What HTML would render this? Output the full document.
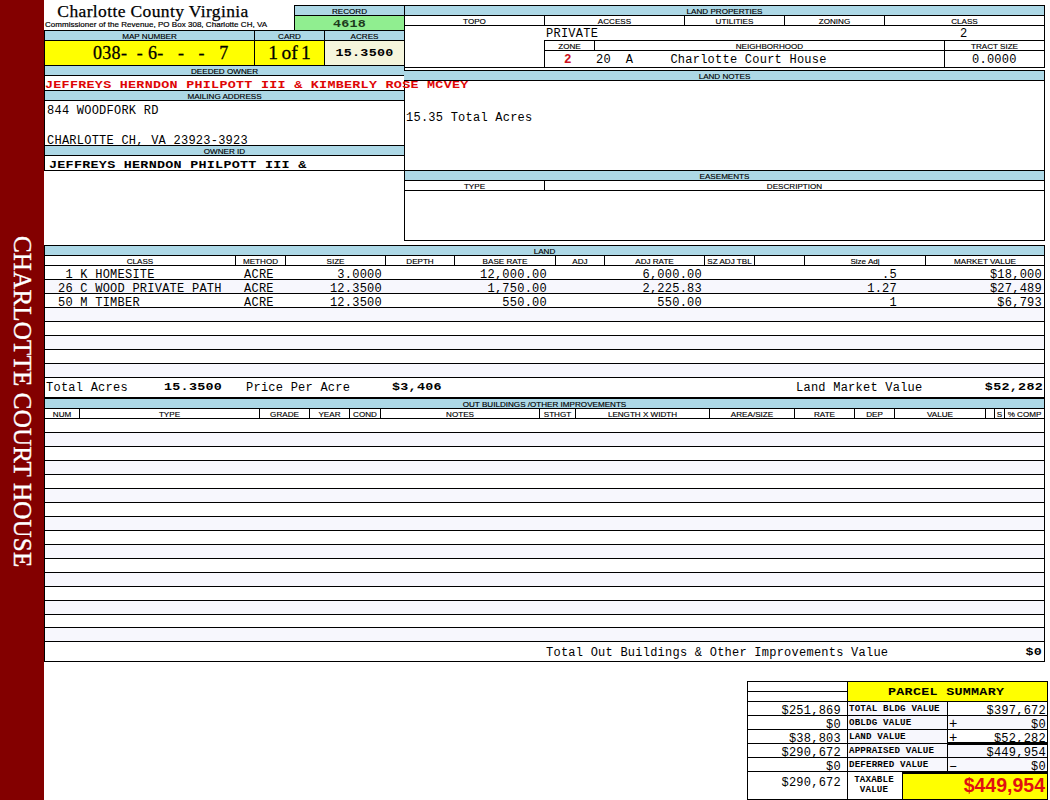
<!DOCTYPE html>
<html><head><meta charset="utf-8"><title>Charlotte County Virginia</title>
<style>
html,body{margin:0;padding:0;}
body{width:1050px;height:800px;position:relative;overflow:hidden;background:#fff;}
div{position:absolute;white-space:pre;box-sizing:border-box;}
.side{left:44px;top:236px;transform-origin:0 0;transform:rotate(90deg);color:#fff;
 font-family:"Liberation Serif",serif;font-size:25px;line-height:43px;height:44px;letter-spacing:0.2px;-webkit-text-stroke:0.35px #fff;}
.title{font-family:"Liberation Serif",serif;font-size:17.5px;line-height:20px;letter-spacing:0.37px;color:#000;-webkit-text-stroke:0.25px #000;}
.sub{font-family:"Liberation Sans",sans-serif;font-size:8px;line-height:10px;color:#000;letter-spacing:0.03px;-webkit-text-stroke:0.2px #000;}
.h{font-family:"Liberation Sans",sans-serif;font-size:8.1px;line-height:9px;height:9px;margin-top:1px;color:#000;-webkit-text-stroke:0.15px #000;}
.m{font-family:"Liberation Mono",monospace;font-size:12px;line-height:14px;letter-spacing:0.24px;color:#000;}
.mb{font-family:"Liberation Mono",monospace;font-size:13.4px;line-height:14px;font-weight:bold;letter-spacing:0.27px;color:#000;transform:scaleY(0.82);transform-origin:0 0;margin-top:1.6px;}
.mapno{font-family:"Liberation Serif",serif;font-size:18px;line-height:24px;letter-spacing:0.3px;color:#000;-webkit-text-stroke:0.3px #000;}
.card{font-family:"Liberation Serif",serif;font-size:19.5px;line-height:25px;color:#000;word-spacing:-1.5px;-webkit-text-stroke:0.3px #000;}
.ps{font-family:"Liberation Mono",monospace;font-size:13px;line-height:15px;font-weight:bold;color:#000;letter-spacing:0.6px;}
.lb{font-family:"Liberation Mono",monospace;font-size:9.2px;line-height:11px;font-weight:bold;letter-spacing:0.16px;color:#000;}
.big{font-family:"Liberation Sans",sans-serif;font-size:19.5px;line-height:28px;font-weight:bold;color:#e01010;padding-right:2px;}
</style></head>
<body>
<div style="left:0px;top:0px;width:44px;height:800px;background:#830000;"></div>
<div class="side">CHARLOTTE COURT HOUSE</div>
<div class="title" style="left:45px;top:1px;width:216px;text-align:center;">Charlotte County Virginia</div>
<div class="sub" style="left:45px;top:20px;">Commissioner of the Revenue, PO Box 308, Charlotte CH, VA</div>
<div style="left:294px;top:5px;width:111px;height:26px;background:#add8e6;"></div>
<div style="left:295px;top:16px;width:109px;height:14px;background:#90ee90;"></div>
<div style="left:294px;top:5px;width:111px;height:1px;background:#000"></div>
<div style="left:294px;top:15px;width:111px;height:1px;background:#000"></div>
<div style="left:294px;top:5px;width:1px;height:26px;background:#000"></div>
<div class="h" style="left:294px;top:6px;width:111px;text-align:center;">RECORD</div>
<div class="mb" style="left:294px;top:17px;width:111px;text-align:center;color:#1c3a1c;">4618</div>
<div style="left:44px;top:30px;width:361px;height:141px;background:#fff;"></div>
<div style="left:44px;top:31px;width:361px;height:9px;background:#add8e6;"></div>
<div style="left:44px;top:66px;width:361px;height:9px;background:#add8e6;"></div>
<div style="left:44px;top:91px;width:361px;height:9px;background:#add8e6;"></div>
<div style="left:44px;top:146px;width:361px;height:9px;background:#add8e6;"></div>
<div style="left:45px;top:41px;width:279px;height:24px;background:#ffff00;"></div>
<div style="left:325px;top:41px;width:79px;height:24px;background:#f5f5dc;"></div>
<div style="left:44px;top:30px;width:361px;height:1px;background:#000"></div>
<div style="left:44px;top:40px;width:361px;height:1px;background:#000"></div>
<div style="left:44px;top:65px;width:361px;height:1px;background:#000"></div>
<div style="left:44px;top:75px;width:361px;height:1px;background:#000"></div>
<div style="left:44px;top:90px;width:361px;height:1px;background:#000"></div>
<div style="left:44px;top:100px;width:361px;height:1px;background:#000"></div>
<div style="left:44px;top:145px;width:361px;height:1px;background:#000"></div>
<div style="left:44px;top:155px;width:361px;height:1px;background:#000"></div>
<div style="left:44px;top:30px;width:1px;height:141px;background:#000"></div>
<div style="left:254px;top:30px;width:1px;height:36px;background:#000"></div>
<div style="left:324px;top:30px;width:1px;height:36px;background:#000"></div>
<div class="h" style="left:44px;top:31px;width:211px;text-align:center;">MAP NUMBER</div>
<div class="h" style="left:254px;top:31px;width:71px;text-align:center;">CARD</div>
<div class="h" style="left:324px;top:31px;width:81px;text-align:center;">ACRES</div>
<div class="h" style="left:44px;top:66px;width:361px;text-align:center;">DEEDED OWNER</div>
<div class="h" style="left:44px;top:91px;width:361px;text-align:center;">MAILING ADDRESS</div>
<div class="h" style="left:44px;top:146px;width:361px;text-align:center;">OWNER ID</div>
<div class="mapno" style="left:93px;top:41px;">038-  - 6-   -   -   7</div>
<div class="card" style="left:254px;top:40px;width:71px;text-align:center;">1 of 1</div>
<div class="mb" style="left:324px;top:46px;width:81px;text-align:center;">15.3500</div>
<div class="m" style="left:47px;top:104px;">844 WOODFORK RD</div>
<div class="m" style="left:47px;top:134px;">CHARLOTTE CH, VA 23923-3923</div>
<div class="mb" style="left:49px;top:158px;">JEFFREYS HERNDON PHILPOTT III &amp;</div>
<div style="left:404px;top:5px;width:641px;height:10px;background:#add8e6;"></div>
<div style="left:404px;top:5px;width:641px;height:1px;background:#000"></div>
<div style="left:404px;top:15px;width:641px;height:1px;background:#000"></div>
<div style="left:404px;top:25px;width:641px;height:1px;background:#000"></div>
<div style="left:404px;top:67px;width:641px;height:1px;background:#000"></div>
<div style="left:404px;top:5px;width:1px;height:236px;background:#000"></div>
<div style="left:1044px;top:5px;width:1px;height:63px;background:#000"></div>
<div style="left:544px;top:15px;width:1px;height:11px;background:#000"></div>
<div style="left:684px;top:15px;width:1px;height:11px;background:#000"></div>
<div style="left:784px;top:15px;width:1px;height:11px;background:#000"></div>
<div style="left:884px;top:15px;width:1px;height:11px;background:#000"></div>
<div class="h" style="left:404px;top:6px;width:641px;text-align:center;">LAND PROPERTIES</div>
<div class="h" style="left:404px;top:16px;width:141px;text-align:center;">TOPO</div>
<div class="h" style="left:544px;top:16px;width:141px;text-align:center;">ACCESS</div>
<div class="h" style="left:684px;top:16px;width:101px;text-align:center;">UTILITIES</div>
<div class="h" style="left:784px;top:16px;width:101px;text-align:center;">ZONING</div>
<div class="h" style="left:884px;top:16px;width:161px;text-align:center;">CLASS</div>
<div class="m" style="left:546px;top:27px;">PRIVATE</div>
<div class="m" style="left:960px;top:27px;">2</div>
<div style="left:544px;top:40px;width:501px;height:1px;background:#000"></div>
<div style="left:544px;top:50px;width:501px;height:1px;background:#000"></div>
<div style="left:544px;top:40px;width:1px;height:28px;background:#000"></div>
<div style="left:594px;top:40px;width:1px;height:11px;background:#000"></div>
<div style="left:944px;top:40px;width:1px;height:28px;background:#000"></div>
<div class="h" style="left:544px;top:41px;width:51px;text-align:center;">ZONE</div>
<div class="h" style="left:594px;top:41px;width:351px;text-align:center;">NEIGHBORHOOD</div>
<div class="h" style="left:944px;top:41px;width:101px;text-align:center;">TRACT SIZE</div>
<div class="m" style="left:564px;top:53px;color:#cc1020;font-weight:bold;font-size:12.5px;">2</div>
<div class="m" style="left:596px;top:53px;">20  A     Charlotte Court House</div>
<div class="m" style="left:972px;top:53px;">0.0000</div>
<div style="left:404px;top:70px;width:641px;height:10px;background:#add8e6;"></div>
<div style="left:404px;top:70px;width:641px;height:1px;background:#000"></div>
<div style="left:404px;top:80px;width:641px;height:1px;background:#000"></div>
<div style="left:1044px;top:70px;width:1px;height:171px;background:#000"></div>
<div style="left:44px;top:170px;width:1001px;height:1px;background:#000"></div>
<div class="h" style="left:404px;top:71px;width:641px;text-align:center;">LAND NOTES</div>
<div class="m" style="left:406px;top:111px;">15.35 Total Acres</div>
<div style="left:405px;top:171px;width:639px;height:9px;background:#add8e6;"></div>
<div style="left:404px;top:180px;width:641px;height:1px;background:#000"></div>
<div style="left:404px;top:190px;width:641px;height:1px;background:#000"></div>
<div style="left:404px;top:240px;width:641px;height:1px;background:#000"></div>
<div style="left:544px;top:180px;width:1px;height:11px;background:#000"></div>
<div class="h" style="left:404px;top:171px;width:641px;text-align:center;">EASEMENTS</div>
<div class="h" style="left:404px;top:181px;width:141px;text-align:center;">TYPE</div>
<div class="h" style="left:544px;top:181px;width:501px;text-align:center;">DESCRIPTION</div>
<div class="mb" style="left:45px;top:78px;color:#de0505;">JEFFREYS HERNDON PHILPOTT III &amp; KIMBERLY ROSE MCVEY</div>
<div style="left:44px;top:245px;width:1001px;height:10px;background:#add8e6;"></div>
<div style="left:45px;top:280px;width:999px;height:13px;background:#f7f7fd;"></div>
<div style="left:45px;top:308px;width:999px;height:13px;background:#f7f7fd;"></div>
<div style="left:45px;top:336px;width:999px;height:13px;background:#f7f7fd;"></div>
<div style="left:45px;top:364px;width:999px;height:13px;background:#f7f7fd;"></div>
<div style="left:44px;top:245px;width:1001px;height:1px;background:#000"></div>
<div style="left:44px;top:255px;width:1001px;height:1px;background:#000"></div>
<div style="left:44px;top:265px;width:1001px;height:1px;background:#000"></div>
<div style="left:44px;top:279px;width:1001px;height:1px;background:#000"></div>
<div style="left:44px;top:293px;width:1001px;height:1px;background:#000"></div>
<div style="left:44px;top:307px;width:1001px;height:1px;background:#000"></div>
<div style="left:44px;top:321px;width:1001px;height:1px;background:#000"></div>
<div style="left:44px;top:335px;width:1001px;height:1px;background:#000"></div>
<div style="left:44px;top:349px;width:1001px;height:1px;background:#000"></div>
<div style="left:44px;top:363px;width:1001px;height:1px;background:#000"></div>
<div style="left:44px;top:377px;width:1001px;height:1px;background:#000"></div>
<div style="left:44px;top:397px;width:1001px;height:2px;background:#000"></div>
<div style="left:44px;top:245px;width:1px;height:417px;background:#000"></div>
<div style="left:1044px;top:245px;width:1px;height:417px;background:#000"></div>
<div class="h" style="left:44px;top:256px;width:192px;text-align:center;">CLASS</div>
<div style="left:235px;top:255px;width:1px;height:11px;background:#000"></div>
<div class="h" style="left:235px;top:256px;width:51px;text-align:center;">METHOD</div>
<div style="left:285px;top:255px;width:1px;height:11px;background:#000"></div>
<div class="h" style="left:285px;top:256px;width:101px;text-align:center;">SIZE</div>
<div style="left:385px;top:255px;width:1px;height:11px;background:#000"></div>
<div class="h" style="left:385px;top:256px;width:70px;text-align:center;">DEPTH</div>
<div style="left:454px;top:255px;width:1px;height:11px;background:#000"></div>
<div class="h" style="left:454px;top:256px;width:102px;text-align:center;">BASE RATE</div>
<div style="left:555px;top:255px;width:1px;height:11px;background:#000"></div>
<div class="h" style="left:555px;top:256px;width:50px;text-align:center;">ADJ</div>
<div style="left:604px;top:255px;width:1px;height:11px;background:#000"></div>
<div class="h" style="left:604px;top:256px;width:101px;text-align:center;">ADJ RATE</div>
<div style="left:704px;top:255px;width:1px;height:11px;background:#000"></div>
<div class="h" style="left:704px;top:256px;width:51px;text-align:center;">SZ ADJ TBL</div>
<div style="left:754px;top:255px;width:1px;height:11px;background:#000"></div>
<div style="left:804px;top:255px;width:1px;height:11px;background:#000"></div>
<div class="h" style="left:804px;top:256px;width:122px;text-align:center;">Size Adj</div>
<div style="left:925px;top:255px;width:1px;height:11px;background:#000"></div>
<div class="h" style="left:925px;top:256px;width:120px;text-align:center;">MARKET VALUE</div>
<div class="h" style="left:44px;top:246px;width:1001px;text-align:center;">LAND</div>
<div class="m" style="left:58px;top:268px;"> 1 K HOMESITE</div>
<div class="m" style="left:244px;top:268px;">ACRE</div>
<div class="m" style="left:282px;top:268px;width:100px;text-align:right;">3.0000</div>
<div class="m" style="left:447px;top:268px;width:100px;text-align:right;">12,000.00</div>
<div class="m" style="left:602px;top:268px;width:100px;text-align:right;">6,000.00</div>
<div class="m" style="left:797px;top:268px;width:100px;text-align:right;">.5</div>
<div class="m" style="left:942px;top:268px;width:100px;text-align:right;">$18,000</div>
<div class="m" style="left:58px;top:282px;">26 C WOOD PRIVATE PATH</div>
<div class="m" style="left:244px;top:282px;">ACRE</div>
<div class="m" style="left:282px;top:282px;width:100px;text-align:right;">12.3500</div>
<div class="m" style="left:447px;top:282px;width:100px;text-align:right;">1,750.00</div>
<div class="m" style="left:602px;top:282px;width:100px;text-align:right;">2,225.83</div>
<div class="m" style="left:797px;top:282px;width:100px;text-align:right;">1.27</div>
<div class="m" style="left:942px;top:282px;width:100px;text-align:right;">$27,489</div>
<div class="m" style="left:58px;top:296px;">50 M TIMBER</div>
<div class="m" style="left:244px;top:296px;">ACRE</div>
<div class="m" style="left:282px;top:296px;width:100px;text-align:right;">12.3500</div>
<div class="m" style="left:447px;top:296px;width:100px;text-align:right;">550.00</div>
<div class="m" style="left:602px;top:296px;width:100px;text-align:right;">550.00</div>
<div class="m" style="left:797px;top:296px;width:100px;text-align:right;">1</div>
<div class="m" style="left:942px;top:296px;width:100px;text-align:right;">$6,793</div>
<div class="m" style="left:46px;top:381px;">Total Acres</div>
<div class="mb" style="left:164px;top:380px;">15.3500</div>
<div class="m" style="left:246px;top:381px;">Price Per Acre</div>
<div class="mb" style="left:392px;top:380px;">$3,406</div>
<div class="m" style="left:796px;top:381px;">Land Market Value</div>
<div class="mb" style="left:943px;top:380px;width:100px;text-align:right;">$52,282</div>
<div style="left:45px;top:399px;width:999px;height:9px;background:#add8e6;"></div>
<div style="left:45px;top:433px;width:999px;height:13px;background:#f7f7fd;"></div>
<div style="left:45px;top:461px;width:999px;height:13px;background:#f7f7fd;"></div>
<div style="left:45px;top:489px;width:999px;height:13px;background:#f7f7fd;"></div>
<div style="left:45px;top:517px;width:999px;height:13px;background:#f7f7fd;"></div>
<div style="left:45px;top:545px;width:999px;height:13px;background:#f7f7fd;"></div>
<div style="left:45px;top:573px;width:999px;height:13px;background:#f7f7fd;"></div>
<div style="left:45px;top:601px;width:999px;height:13px;background:#f7f7fd;"></div>
<div style="left:45px;top:628px;width:999px;height:13px;background:#f7f7fd;"></div>
<div style="left:44px;top:408px;width:1001px;height:1px;background:#000"></div>
<div style="left:44px;top:418px;width:1001px;height:1px;background:#000"></div>
<div style="left:44px;top:432px;width:1001px;height:1px;background:#000"></div>
<div style="left:44px;top:446px;width:1001px;height:1px;background:#000"></div>
<div style="left:44px;top:460px;width:1001px;height:1px;background:#000"></div>
<div style="left:44px;top:474px;width:1001px;height:1px;background:#000"></div>
<div style="left:44px;top:488px;width:1001px;height:1px;background:#000"></div>
<div style="left:44px;top:502px;width:1001px;height:1px;background:#000"></div>
<div style="left:44px;top:516px;width:1001px;height:1px;background:#000"></div>
<div style="left:44px;top:530px;width:1001px;height:1px;background:#000"></div>
<div style="left:44px;top:544px;width:1001px;height:1px;background:#000"></div>
<div style="left:44px;top:558px;width:1001px;height:1px;background:#000"></div>
<div style="left:44px;top:572px;width:1001px;height:1px;background:#000"></div>
<div style="left:44px;top:586px;width:1001px;height:1px;background:#000"></div>
<div style="left:44px;top:600px;width:1001px;height:1px;background:#000"></div>
<div style="left:44px;top:614px;width:1001px;height:1px;background:#000"></div>
<div style="left:44px;top:627px;width:1001px;height:1px;background:#000"></div>
<div style="left:44px;top:641px;width:1001px;height:1px;background:#000"></div>
<div style="left:44px;top:661px;width:1001px;height:1px;background:#000"></div>
<div class="h" style="left:44px;top:409px;width:36px;text-align:center;">NUM</div>
<div style="left:79px;top:408px;width:1px;height:11px;background:#000"></div>
<div class="h" style="left:79px;top:409px;width:181px;text-align:center;">TYPE</div>
<div style="left:259px;top:408px;width:1px;height:11px;background:#000"></div>
<div class="h" style="left:259px;top:409px;width:51px;text-align:center;">GRADE</div>
<div style="left:309px;top:408px;width:1px;height:11px;background:#000"></div>
<div class="h" style="left:309px;top:409px;width:41px;text-align:center;">YEAR</div>
<div style="left:349px;top:408px;width:1px;height:11px;background:#000"></div>
<div class="h" style="left:349px;top:409px;width:32px;text-align:center;">COND</div>
<div style="left:380px;top:408px;width:1px;height:11px;background:#000"></div>
<div class="h" style="left:380px;top:409px;width:160px;text-align:center;">NOTES</div>
<div style="left:539px;top:408px;width:1px;height:11px;background:#000"></div>
<div class="h" style="left:539px;top:409px;width:37px;text-align:center;">STHGT</div>
<div style="left:575px;top:408px;width:1px;height:11px;background:#000"></div>
<div class="h" style="left:575px;top:409px;width:135px;text-align:center;">LENGTH X WIDTH</div>
<div style="left:709px;top:408px;width:1px;height:11px;background:#000"></div>
<div class="h" style="left:709px;top:409px;width:86px;text-align:center;">AREA/SIZE</div>
<div style="left:794px;top:408px;width:1px;height:11px;background:#000"></div>
<div class="h" style="left:794px;top:409px;width:61px;text-align:center;">RATE</div>
<div style="left:854px;top:408px;width:1px;height:11px;background:#000"></div>
<div class="h" style="left:854px;top:409px;width:41px;text-align:center;">DEP</div>
<div style="left:894px;top:408px;width:1px;height:11px;background:#000"></div>
<div class="h" style="left:894px;top:409px;width:92px;text-align:center;">VALUE</div>
<div style="left:985px;top:408px;width:1px;height:11px;background:#000"></div>
<div style="left:994px;top:408px;width:1px;height:11px;background:#000"></div>
<div class="h" style="left:994px;top:409px;width:11px;text-align:center;">S</div>
<div style="left:1004px;top:408px;width:1px;height:11px;background:#000"></div>
<div class="h" style="left:1004px;top:409px;width:41px;text-align:center;">% COMP</div>
<div class="h" style="left:44px;top:399px;width:1001px;text-align:center;">OUT BUILDINGS /OTHER IMPROVEMENTS</div>
<div class="m" style="left:546px;top:646px;">Total Out Buildings &amp; Other Improvements Value</div>
<div class="mb" style="left:942px;top:645px;width:100px;text-align:right;">$0</div>
<div style="left:747px;top:681px;width:301px;height:119px;background:#fff;"></div>
<div style="left:848px;top:682px;width:199px;height:19px;background:#ffff00;"></div>
<div style="left:903px;top:774px;width:144px;height:25px;background:#ffff00;"></div>
<div style="left:848px;top:702px;width:99px;height:13px;background:#f7f7fd;"></div>
<div style="left:848px;top:716px;width:99px;height:13px;background:#f7f7fd;"></div>
<div style="left:948px;top:716px;width:99px;height:13px;background:#f7f7fd;"></div>
<div style="left:848px;top:730px;width:99px;height:13px;background:#f7f7fd;"></div>
<div style="left:848px;top:744px;width:99px;height:13px;background:#f7f7fd;"></div>
<div style="left:948px;top:744px;width:99px;height:13px;background:#f7f7fd;"></div>
<div style="left:848px;top:758px;width:99px;height:13px;background:#f7f7fd;"></div>
<div style="left:948px;top:758px;width:99px;height:13px;background:#f7f7fd;"></div>
<div style="left:747px;top:681px;width:301px;height:1px;background:#000"></div>
<div style="left:747px;top:691px;width:101px;height:1px;background:#000"></div>
<div style="left:747px;top:701px;width:301px;height:1px;background:#000"></div>
<div style="left:747px;top:715px;width:301px;height:1px;background:#000"></div>
<div style="left:747px;top:729px;width:301px;height:1px;background:#000"></div>
<div style="left:747px;top:743px;width:301px;height:1px;background:#000"></div>
<div style="left:747px;top:757px;width:301px;height:1px;background:#000"></div>
<div style="left:747px;top:771px;width:301px;height:1px;background:#000"></div>
<div style="left:947px;top:742px;width:101px;height:3px;background:#000"></div>
<div style="left:902px;top:771px;width:146px;height:3px;background:#000"></div>
<div style="left:747px;top:799px;width:301px;height:1px;background:#000"></div>
<div style="left:747px;top:681px;width:1px;height:119px;background:#000"></div>
<div style="left:847px;top:681px;width:1px;height:119px;background:#000"></div>
<div style="left:1047px;top:681px;width:1px;height:119px;background:#000"></div>
<div style="left:947px;top:701px;width:1px;height:71px;background:#000"></div>
<div style="left:902px;top:771px;width:1px;height:29px;background:#000"></div>
<div class="mb" style="left:888px;top:685px;">PARCEL SUMMARY</div>
<div class="m" style="left:741px;top:704px;width:100px;text-align:right;">$251,869</div>
<div class="lb" style="left:849px;top:703px;">TOTAL BLDG VALUE</div>
<div class="m" style="left:946px;top:704px;width:100px;text-align:right;">$397,672</div>
<div class="m" style="left:741px;top:718px;width:100px;text-align:right;">$0</div>
<div class="lb" style="left:849px;top:717px;">OBLDG VALUE</div>
<div class="m" style="left:946px;top:718px;width:100px;text-align:right;">$0</div>
<div class="m" style="left:949px;top:717px;font-size:14px;">+</div>
<div class="m" style="left:741px;top:732px;width:100px;text-align:right;">$38,803</div>
<div class="lb" style="left:849px;top:731px;">LAND VALUE</div>
<div class="m" style="left:946px;top:732px;width:100px;text-align:right;">$52,282</div>
<div class="m" style="left:949px;top:731px;font-size:14px;">+</div>
<div class="m" style="left:741px;top:746px;width:100px;text-align:right;">$290,672</div>
<div class="lb" style="left:849px;top:745px;">APPRAISED VALUE</div>
<div class="m" style="left:946px;top:746px;width:100px;text-align:right;">$449,954</div>
<div class="m" style="left:741px;top:760px;width:100px;text-align:right;">$0</div>
<div class="lb" style="left:849px;top:759px;">DEFERRED VALUE</div>
<div class="m" style="left:946px;top:760px;width:100px;text-align:right;">$0</div>
<div class="m" style="left:949px;top:759px;font-size:14px;">–</div>
<div class="m" style="left:741px;top:776px;width:100px;text-align:right;">$290,672</div>
<div class="lb" style="left:848px;top:774px;width:52px;text-align:center;">TAXABLE</div>
<div class="lb" style="left:848px;top:784px;width:52px;text-align:center;">VALUE</div>
<div class="big" style="left:903px;top:771px;width:144px;text-align:right;">$449,954</div>
</body></html>
